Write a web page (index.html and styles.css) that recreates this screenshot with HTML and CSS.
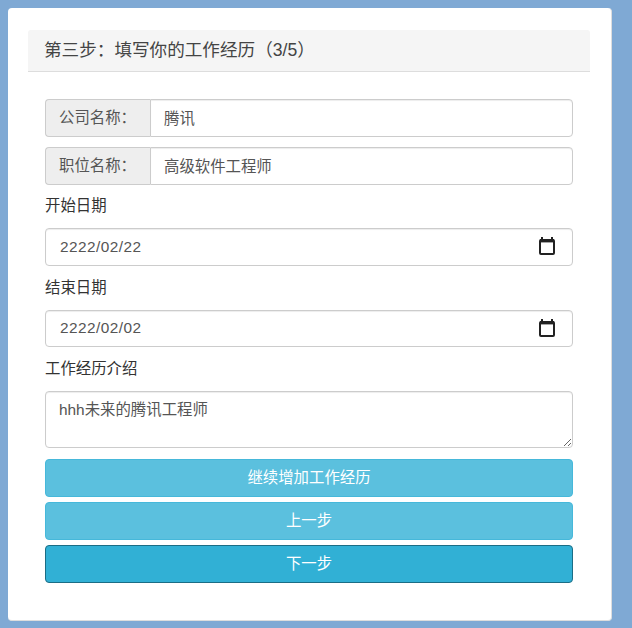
FILE: index.html
```html
<!DOCTYPE html>
<html lang="zh-CN">
<head>
<meta charset="utf-8">
<title>填写你的工作经历</title>
<link rel="stylesheet" href="styles.css">
</head>
<body>
<main class="card">
  <h2 class="heading">第三步&#xFF1A;填写你的工作经历&#xFF08;3/5&#xFF09;</h2>
  <form class="form">
    <div class="group">
      <span class="addon">公司名称&#xFF1A;</span>
      <input class="control joined" type="text" value="腾讯">
    </div>
    <div class="group">
      <span class="addon">职位名称&#xFF1A;</span>
      <input class="control joined" type="text" value="高级软件工程师">
    </div>
    <label class="label">开始日期</label>
    <div class="control date">
      <input class="date-text" type="text" value="2222/02/22">
      <svg class="cal" width="16" height="18" viewBox="0 0 16 18"><path d="M3 0v3M13 0v3" stroke="#222" stroke-width="2" fill="none"/><rect x="1" y="3" width="14" height="14" rx="1" stroke="#222" stroke-width="2" fill="#fff"/><rect x="1" y="2" width="14" height="3.4" fill="#222"/></svg>
    </div>
    <label class="label">结束日期</label>
    <div class="control date">
      <input class="date-text" type="text" value="2222/02/02">
      <svg class="cal" width="16" height="18" viewBox="0 0 16 18"><path d="M3 0v3M13 0v3" stroke="#222" stroke-width="2" fill="none"/><rect x="1" y="3" width="14" height="14" rx="1" stroke="#222" stroke-width="2" fill="#fff"/><rect x="1" y="2" width="14" height="3.4" fill="#222"/></svg>
    </div>
    <label class="label">工作经历介绍</label>
    <textarea class="control area">hhh未来的腾讯工程师</textarea>
    <div class="buttons">
      <button class="btn" type="button">继续增加工作经历</button>
      <button class="btn" type="button">上一步</button>
      <button class="btn active" type="button">下一步</button>
    </div>
  </form>
</main>
</body>
</html>
```
FILE: styles.css
```css
* { box-sizing: border-box; }
html, body { height: 100%; }
body {
  margin: 0;
  padding: 8px 20px 7px 8px;
  background: #7fa9d4;
  font-family: "Liberation Sans", "Noto Sans CJK SC", sans-serif;
  color: #333;
  overflow: hidden;
}
.card {
  height: 613px;
  padding: 22px 21px 0 20px;
  background: #fff;
  border: 1px solid #ddd;
  border-width: 0 1px 1px 0;
  border-radius: 4px;
}
.heading {
  margin: 0;
  height: 42px;
  padding: 0 16px;
  font-size: 17.6px;
  font-weight: 400;
  line-height: 40px;
  color: #444;
  background: #f5f5f5;
  border-bottom: 1px solid #ddd;
  border-radius: 3px 3px 0 0;
}
.form {
  display: flex;
  flex-direction: column;
  padding: 27px 17px 0;
}
.group { display: flex; height: 38px; margin-bottom: 10px; }
.addon {
  width: 105px;
  flex: none;
  padding-left: 13px;
  font-size: 15.4px;
  line-height: 36px;
  color: #555;
  background: #eee;
  border: 1px solid #ccc;
  border-right: 0;
  border-radius: 4px 0 0 4px;
}
.control {
  width: 100%;
  height: 38px;
  padding: 0 13px 2px;
  font: 15.4px "Liberation Sans", "Noto Sans CJK SC", sans-serif;
  color: #555;
  background: #fff;
  border: 1px solid #ccc;
  border-radius: 4px;
  box-shadow: inset 0 1px 1px rgba(0, 0, 0, .075);
  outline: 0;
}
.joined { flex: 1; min-width: 0; border-radius: 0 4px 4px 0; }
.label { display: block; height: 33.2px; font-size: 15.4px; line-height: 22.6px; color: #333; }
.date {
  display: flex;
  align-items: center;
  height: 37.4px;
  margin-bottom: 11px;
  padding: 0 17px 0 14px;
}
.date-text {
  flex: 1;
  min-width: 0;
  padding: 0;
  font: inherit;
  letter-spacing: .45px;
  color: inherit;
  background: none;
  border: 0;
  outline: 0;
}
.cal { flex: none; display: block; margin-top: -1px; }
.area { display: block; height: 57px; padding: 8px 13px 6px; margin-bottom: 10.6px; line-height: 20px; resize: vertical; }
.buttons { display: flex; flex-direction: column; gap: 5px; }
.btn {
  height: 38px;
  padding: 0 0 4px;
  font: 15.4px "Liberation Sans", "Noto Sans CJK SC", sans-serif;
  color: #fff;
  background: #5bc0de;
  border: 1px solid #46b8da;
  border-radius: 4px;
}
.btn.active { background: #31b0d5; border-color: #1b6d85; }
```
